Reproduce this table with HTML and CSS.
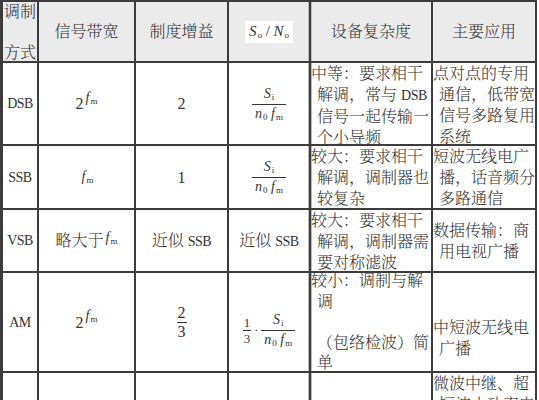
FILE: index.html
```html
<!DOCTYPE html>
<html lang="zh">
<head>
<meta charset="utf-8">
<title>调制方式比较</title>
<link rel="stylesheet" href="styles.css">
</head>
<body>
<div class="tbl">
  <div class="cell hd hd1">调制<br>&nbsp;<br>方式</div>
  <div class="cell hd ctr">信号带宽</div>
  <div class="cell hd ctr">制度增益</div>
  <div class="cell hd ctr c4"><span class="snr"><i>S</i><span class="sb">o</span> / <i>N</i><span class="sb">o</span></span></div>
  <div class="cell hd ctr c5">设备复杂度</div>
  <div class="cell hd ctr">主要应用</div>

  <div class="cell ctr lat">DSB</div>
  <div class="cell ctr"><span><span class="dig">2</span><span class="fm r7"><i>f</i><span class="sb">m</span></span></span></div>
  <div class="cell ctr"><span class="dig">2</span></div>
  <div class="cell ctr c4"><span class="frac"><span class="nu"><i>S</i><span class="sb">i</span></span><span class="de"><i>n</i><span class="sb">0</span> <i>f</i><span class="sb">m</span></span></span></div>
  <div class="cell c5"><div class="txt">中等：要求相干<br>解调，常与 <span class="lt">DSB</span><br>信号一起传输一<br>个小导频</div></div>
  <div class="cell"><div class="txt">点对点的专用<br>通信，低带宽<br>信号多路复用<br>系统</div></div>

  <div class="cell ctr lat">SSB</div>
  <div class="cell ctr"><span class="fm"><i>f</i><span class="sb">m</span></span></div>
  <div class="cell ctr"><span class="dig">1</span></div>
  <div class="cell ctr c4"><span class="frac"><span class="nu"><i>S</i><span class="sb">i</span></span><span class="de"><i>n</i><span class="sb">0</span> <i>f</i><span class="sb">m</span></span></span></div>
  <div class="cell c5"><div class="txt">较大：要求相干<br>解调，调制器也<br>较复杂</div></div>
  <div class="cell"><div class="txt">短波无线电广<br>播，话音频分<br>多路通信</div></div>

  <div class="cell ctr lat">VSB</div>
  <div class="cell ctr"><span>略大于<span class="fm r4"><i>f</i><span class="sb">m</span></span></span></div>
  <div class="cell ctr"><span>近似 <span class="lt">SSB</span></span></div>
  <div class="cell ctr c4"><span>近似 <span class="lt">SSB</span></span></div>
  <div class="cell c5"><div class="txt">较大：要求相干<br>解调，调制器需<br>要对称滤波</div></div>
  <div class="cell vmid"><div class="txt">数据传输：商<br>用电视广播</div></div>

  <div class="cell ctr lat">AM</div>
  <div class="cell ctr"><span><span class="dig">2</span><span class="fm r8"><i>f</i><span class="sb">m</span></span></span></div>
  <div class="cell ctr"><span class="frac mid"><span class="nu">2</span><span class="de">3</span></span></div>
  <div class="cell ctr c4 low"><span class="frac small"><span class="nu">1</span><span class="de">3</span></span><span class="dot">·</span><span class="frac"><span class="nu"><i>S</i><span class="sb">i</span></span><span class="de"><i>n</i><span class="sb">0</span> <i>f</i><span class="sb">m</span></span></span></div>
  <div class="cell c5"><div class="txt am5">较小：调制与解<br>调<br>&nbsp;<br>（包络检波）简<br>单</div></div>
  <div class="cell am6"><div class="txt">中短波无线电<br>广播</div></div>

  <div class="cell"></div>
  <div class="cell"></div>
  <div class="cell"></div>
  <div class="cell c4"></div>
  <div class="cell c5"></div>
  <div class="cell"><div class="txt">微波中继、超<br>短波小功率电</div></div>
</div>
</body>
</html>
```
FILE: styles.css
```css
html, body {
  margin: 0;
  padding: 0;
  background: #ffffff;
  overflow: hidden;
}

body {
  font-family: "Liberation Serif", "Noto Serif CJK SC", "Noto Sans CJK SC", serif;
  font-size: 16px;
  font-weight: 300;
  color: #333333;
}

.tbl {
  display: grid;
  box-sizing: border-box;
  width: 537px;
  height: 400px;
  grid-template-columns: 34px 95px 91px 80px 120px 102px;
  grid-template-rows: 59px 81px 62px 61px 98px 27px;
  gap: 2px;
  padding: 2px 2px 0 3px;
  background: #3c3c3c;
}

.cell {
  background: #ffffff;
  overflow: hidden;
  line-height: 21px;
  white-space: nowrap;
}

.hd {
  background: #ebebeb;
}

.hd1 {
  text-align: center;
  line-height: 20.5px;
}

.ctr {
  display: flex;
  align-items: center;
  justify-content: center;
}

.vmid {
  display: flex;
  align-items: center;
}

.txt {
  padding-left: 6px;
  text-indent: -6px;
}

.am5 {
  line-height: 20.5px;
  margin-top: -2px;
}

.am6 {
  padding-top: 44px;
  box-sizing: border-box;
}

.low {
  padding-top: 16px;
  box-sizing: border-box;
}

.c4 {
  box-shadow: inset -1px 0 0 #bdbdbd;
}

.c5 {
  box-shadow: inset 1px 0 0 #bdbdbd;
}

.lat {
  font-size: 14px;
  letter-spacing: -0.5px;
}

.lt {
  font-size: 14px;
  letter-spacing: -0.5px;
}

.dig {
  font-size: 16px;
}

.fm {
  font-size: 14px;
  line-height: 1;
  margin-left: 2px;
}

.r4 {
  position: relative;
  top: -4px;
}

.r7 {
  position: relative;
  top: -7px;
}

.r8 {
  position: relative;
  top: -8px;
}

i {
  font-style: italic;
  font-family: "Liberation Serif", serif;
}

.sb {
  font-size: 9px;
  position: relative;
  top: 2px;
  margin-left: 1px;
}

.snr {
  background: #ffffff;
  font-size: 15px;
  line-height: 20px;
  padding: 0 4px;
}

.frac {
  display: inline-flex;
  flex-direction: column;
  align-items: center;
  line-height: 1;
  font-size: 14px;
}

.frac .nu {
  padding: 0 2px 3px;
}

.frac .de {
  border-top: 1px solid #333333;
  padding: 2px 3px 0;
  align-self: stretch;
  text-align: center;
}

.frac.mid {
  font-size: 16px;
}

.frac.mid .nu {
  padding: 0 1px 1px;
}

.frac.mid .de {
  padding: 1px 1px 0;
}

.frac.small {
  font-size: 13px;
}

.frac.small .nu {
  padding: 0 1px 1px;
}

.frac.small .de {
  padding: 1px 1px 0;
}

.dot {
  margin: 0 3px;
  font-size: 12px;
}
```
